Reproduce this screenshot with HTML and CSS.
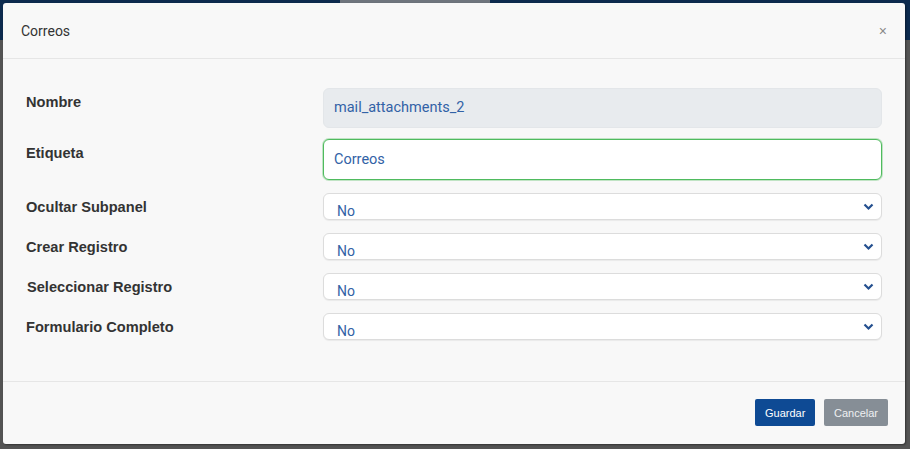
FILE: index.html
```html
<!DOCTYPE html>
<html lang="es">
<head>
  <meta charset="UTF-8" />
  <title>Correos</title>
  <link rel="stylesheet" href="styles.css">
</head>
<body>
  <div class="backdrop">
    <div class="logo-ghost"></div>
    <div class="modal">
      <div class="modal-header">
        <span class="modal-title">Correos</span>
        <span class="close">&times;</span>
      </div>

      <div class="modal-body">
        <div class="row">
          <label class="lbl">Nombre</label>
          <div class="field readonly">mail_attachments_2</div>
        </div>
        <div class="row">
          <label class="lbl">Etiqueta</label>
          <div class="field valid">Correos</div>
        </div>
        <div class="row sel-row">
          <label class="lbl">Ocultar Subpanel</label>
          <div class="select"><span>No</span>
            <svg class="chev" width="11" height="8" viewBox="0 0 11 8"><path d="M1.5 1.5l4 4 4-4" fill="none" stroke="#234f8f" stroke-width="2.2"/></svg>
          </div>
        </div>
        <div class="row sel-row">
          <label class="lbl">Crear Registro</label>
          <div class="select"><span>No</span>
            <svg class="chev" width="11" height="8" viewBox="0 0 11 8"><path d="M1.5 1.5l4 4 4-4" fill="none" stroke="#234f8f" stroke-width="2.2"/></svg>
          </div>
        </div>
        <div class="row sel-row">
          <label class="lbl shift">Seleccionar Registro</label>
          <div class="select"><span>No</span>
            <svg class="chev" width="11" height="8" viewBox="0 0 11 8"><path d="M1.5 1.5l4 4 4-4" fill="none" stroke="#234f8f" stroke-width="2.2"/></svg>
          </div>
        </div>
        <div class="row sel-row">
          <label class="lbl">Formulario Completo</label>
          <div class="select"><span>No</span>
            <svg class="chev" width="11" height="8" viewBox="0 0 11 8"><path d="M1.5 1.5l4 4 4-4" fill="none" stroke="#234f8f" stroke-width="2.2"/></svg>
          </div>
        </div>
      </div>

      <div class="modal-footer">
        <button class="btn btn-primary">Guardar</button>
        <button class="btn btn-secondary">Cancelar</button>
      </div>
    </div>
  </div>
</body>
</html>
```

FILE: styles.css
```css
html, body { margin: 0; padding: 0; }
body { width: 910px; height: 449px; overflow: hidden; font-family: Roboto, "Liberation Sans", Arial, sans-serif; }
.backdrop { position: relative; width: 910px; height: 449px; background: linear-gradient(#0c2a4e 0, #0c2a4e 40px, #545454 40px); padding: 3px 0 0 3px; box-sizing: border-box; }
.logo-ghost { position: absolute; left: 340px; top: 0; width: 150px; height: 3px; background: #6f757d; }
.modal { position: relative; width: 902px; height: 441px; background: #f8f8f8; border-radius: 3px; display: flex; flex-direction: column; box-shadow: 1px 1px 2px rgba(0,0,0,0.4); }
.modal-header { height: 56px; border-bottom: 1px solid #e6e6e6; display: flex; align-items: center; justify-content: space-between; padding: 0 18px 0 18px; box-sizing: border-box; }
.modal-title { font-size: 14px; color: #333; }
.close { font-family: "Liberation Sans", Arial, sans-serif; font-size: 14px; color: #888; }
.modal-body { flex: 1; padding: 29px 23px 0 23px; border-bottom: 1px solid #e6e6e6; }
.row { display: flex; margin-bottom: 11px; }
.row:nth-child(2) { margin-bottom: 13px; }
.sel-row { margin-bottom: 13px; }
.lbl { width: 297px; font-family: "Liberation Sans", Arial, sans-serif; font-weight: bold; font-size: 14.6px; line-height: 16px; color: #333; padding-top: 6px; }
.lbl.shift { padding-left: 1px; width: 296px; }
.field { flex: 1; height: 40px; box-sizing: border-box; border-radius: 6px; padding: 0 10px; font-size: 14.5px; line-height: 38px; color: #3262a6; }
.readonly { background: #e8ebee; border: 1px solid #e3e6e9; }
.valid { background: #fff; border: 1px solid #4fbb5e; box-shadow: 0 0 0 1px rgba(90, 190, 100, 0.35); height: 41px; line-height: 39px; }
.select { flex: 1; position: relative; height: 27px; box-sizing: border-box; background: #fff; border: 1px solid #dcdcdc; border-radius: 6px; padding: 0 13px; overflow: hidden; font-size: 14px; color: #3262a6; box-shadow: 0 1px 1px rgba(0,0,0,0.06); }
.select span { display: block; line-height: 18px; padding-top: 8px; }
.chev { position: absolute; right: 7px; top: 9px; }
.modal-footer { height: 62px; flex: none; display: flex; justify-content: flex-end; align-items: flex-start; gap: 9px; padding: 17px 17px 0 0; box-sizing: border-box; }
.btn { font-family: "Liberation Sans", Arial, sans-serif; font-size: 11px; height: 27px; border: none; border-radius: 2px; color: #fff; padding: 0 10px; }
.btn-primary { background: #0e4a94; width: 60px; }
.btn-secondary { background: #868e96; width: 64px; color: #eef0f2; }
```
